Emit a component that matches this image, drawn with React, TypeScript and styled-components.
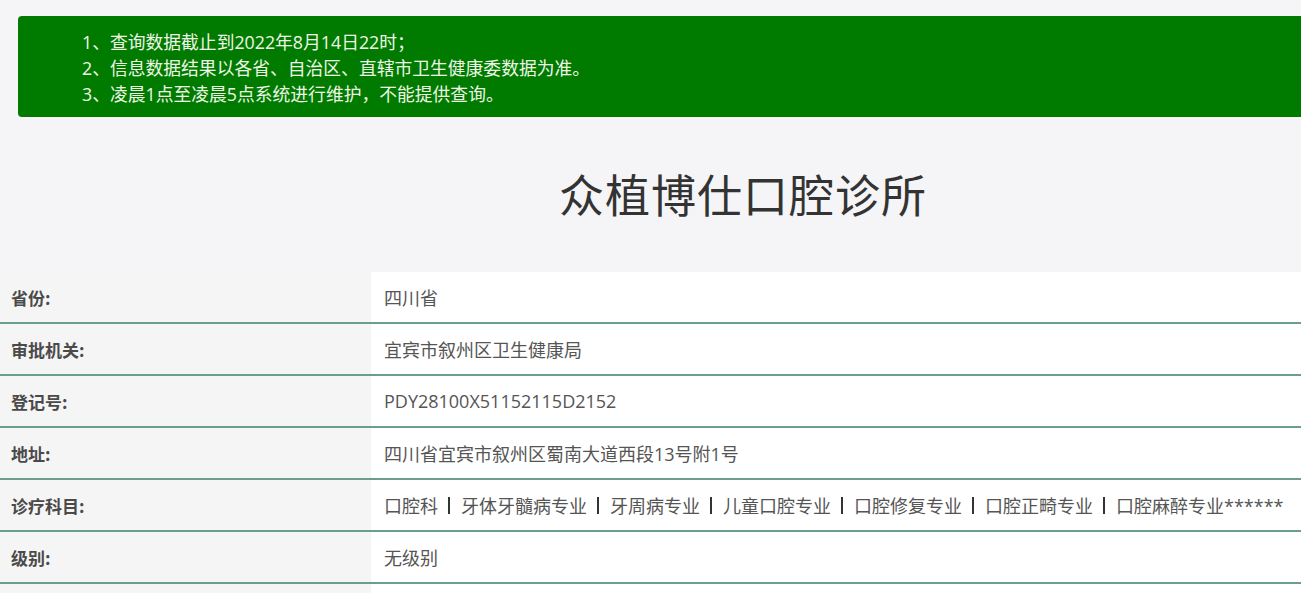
import React from "react";
import styled, { createGlobalStyle } from "styled-components";

const Global = createGlobalStyle`
  html, body { margin: 0; padding: 0; background: #f5f5f7; overflow: hidden; }
  body { font-family: "Open Sans", "Noto Sans CJK SC", sans-serif; }
`;

const Page = styled.div`
  width: 1486px;
  padding-top: 16px;
`;

const Notice = styled.div`
  margin: 0 18px;
  height: 101px;
  box-sizing: border-box;
  background: #007b00;
  border-radius: 4px;
  padding: 13px 0 0 64px;
  color: #eef6e6;
  font-size: 17.8px;
  line-height: 26px;
`;

const NoticeLine = styled.div``;

const Title = styled.h1`
  margin: 0;
  height: 155px;
  display: flex;
  align-items: center;
  justify-content: center;
  font-family: "Noto Sans CJK SC", sans-serif;
  font-weight: 400;
  font-size: 45px;
  color: #333;
  letter-spacing: 1px;
  padding-bottom: 2px;
  box-sizing: border-box;
`;

const Table = styled.div`
  display: flex;
  flex-direction: column;
`;

const Row = styled.div`
  display: grid;
  grid-template-columns: 371px 1fr;
  height: 52px;
  border-bottom: 2px solid #6aa08a;
  box-sizing: border-box;
`;

const Label = styled.div`
  background: #f5f5f5;
  display: flex;
  align-items: center;
  padding-left: 11px;
  font-family: "Noto Sans CJK SC", sans-serif;
  font-weight: 700;
  font-size: 17px;
  color: #4a4a4a;
`;

const Value = styled.div`
  background: #fff;
  display: flex;
  align-items: center;
  padding-left: 13px;
  font-size: 18px;
  color: #555;
  white-space: nowrap;
`;

const Sep = styled.span`
  display: inline-block;
  width: 2px;
  height: 17px;
  background: #333;
  margin: 0 11px 0 10px;
`;

const subjects = ["口腔科", "牙体牙髓病专业", "牙周病专业", "儿童口腔专业", "口腔修复专业", "口腔正畸专业", "口腔麻醉专业******"];

const rows: [string, React.ReactNode][] = [
  ["省份:", "四川省"],
  ["审批机关:", "宜宾市叙州区卫生健康局"],
  ["登记号:", "PDY28100X51152115D2152"],
  ["地址:", "四川省宜宾市叙州区蜀南大道西段13号附1号"],
  [
    "诊疗科目:",
    subjects.map((s, i) => (
      <React.Fragment key={i}>
        {i > 0 && <Sep />}
        {s}
      </React.Fragment>
    )),
  ],
  ["级别:", "无级别"],
  ["", ""],
];

export default function App() {
  return (
    <>
      <Global />
      <Page>
        <Notice>
          <NoticeLine>1、查询数据截止到2022年8月14日22时；</NoticeLine>
          <NoticeLine>2、信息数据结果以各省、自治区、直辖市卫生健康委数据为准。</NoticeLine>
          <NoticeLine>3、凌晨1点至凌晨5点系统进行维护，不能提供查询。</NoticeLine>
        </Notice>
        <Title>众植博仕口腔诊所</Title>
        <Table>
          {rows.map(([l, v], i) => (
            <Row key={i}>
              <Label>{l}</Label>
              <Value>{v}</Value>
            </Row>
          ))}
        </Table>
      </Page>
    </>
  );
}
